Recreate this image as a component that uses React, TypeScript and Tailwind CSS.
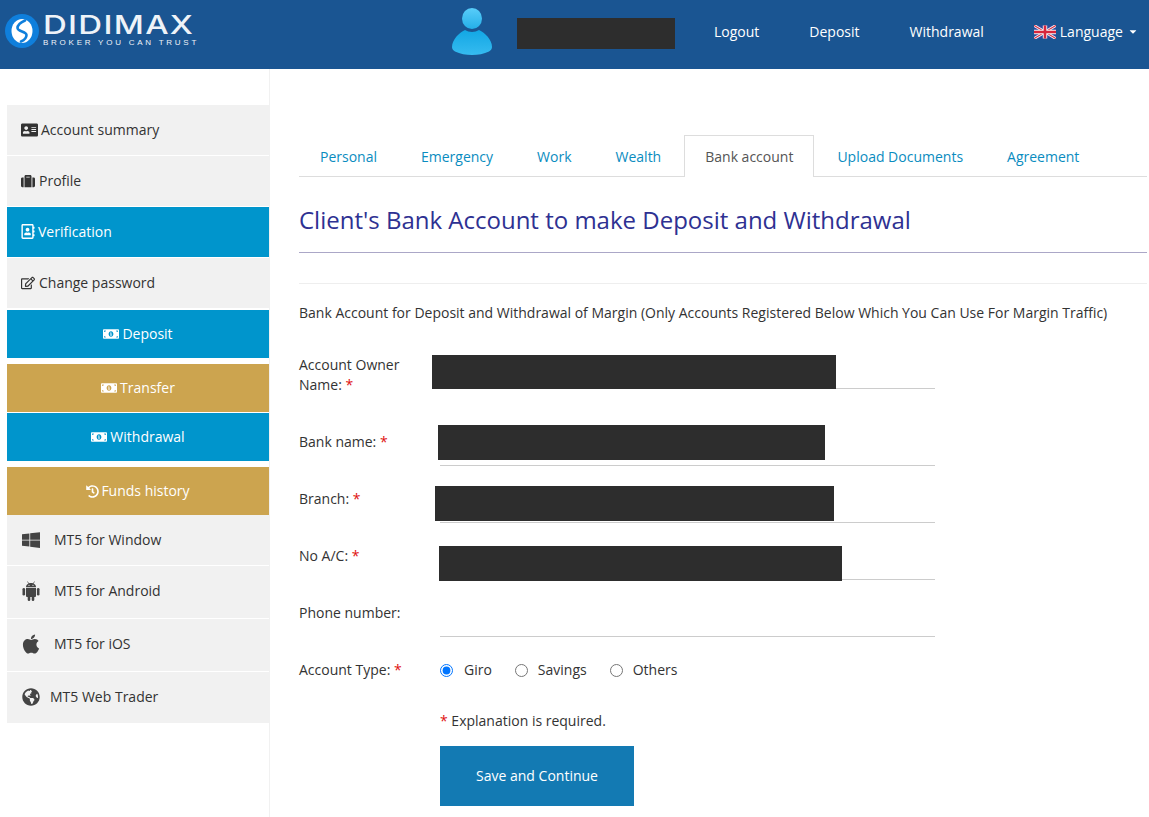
import type { ComponentType, ReactNode, SVGProps } from "react";
import {
  FaAddressCard,
  FaApple,
  FaCaretDown,
  FaGlobeAmericas,
  FaHistory,
  FaMoneyBillAlt,
  FaRegAddressBook,
  FaRegEdit,
  FaSuitcase,
  FaWindows,
} from "react-icons/fa";

const TABS = ["Personal", "Emergency", "Work", "Wealth", "Bank account", "Upload Documents", "Agreement"];

function Redacted({ className }: { className: string }) {
  return <div className={`absolute bg-[#2d2d2d] ${className}`} />;
}

function Logo() {
  return (
    <div className="flex items-center pl-[5px]">
      <svg width="34" height="34" viewBox="0 0 34 34" className="shrink-0">
        <circle cx="17" cy="17" r="17" fill="#0f7fdc" />
        <ellipse cx="17" cy="17" rx="10.500" ry="12" fill="#fff" />
        <path d="M20 6.500c-4.500 2-7.500 4.500-7.500 7.500 0 3.500 9 3.500 9 7 0 2.500-2 5-5.500 6.500" fill="none" stroke="#0f7fdc" strokeWidth="2.600" strokeLinecap="round" />
      </svg>
      <div className="ml-[4px] flex w-[156px] flex-col gap-[5px] font-['Inter',sans-serif] text-[#eef3f8]">
        <span className="origin-left scale-x-[1.27] text-[26px] leading-[19px] tracking-[1px] whitespace-nowrap">DIDIMAX</span>
        <span className="font-['Liberation_Sans',sans-serif] text-[8px] leading-[7px] tracking-[2.75px] whitespace-nowrap">BROKER YOU CAN TRUST</span>
      </div>
    </div>
  );
}

function Avatar() {
  return (
    <svg width="40" height="47" viewBox="0 0 40 47" className="shrink-0">
      <defs>
        <linearGradient id="avatarHead" x1="0" y1="0" x2="0" y2="1">
          <stop offset="0%" stopColor="#59cdfa" />
          <stop offset="100%" stopColor="#24afe8" />
        </linearGradient>
        <linearGradient id="avatarBody" x1="0" y1="0" x2="0" y2="1">
          <stop offset="0%" stopColor="#12a7e4" />
          <stop offset="100%" stopColor="#36bbf0" />
        </linearGradient>
      </defs>
      <ellipse cx="20" cy="10.500" rx="10" ry="10.500" fill="url(#avatarHead)" />
      <path d="M13 22c4 2.500 10 2.500 14 0 6 2.500 13 10 13 17 0 2-1 3-3 4.500-5 2.500-11 3.500-17 3.500s-12-1-17-3.500C1 42 0 41 0 39c0-7 7-14.500 13-17z" fill="url(#avatarBody)" />
    </svg>
  );
}

function UkFlag() {
  return (
    <svg width="22" height="14" viewBox="0 0 60 36" className="shrink-0">
      <rect width="60" height="36" fill="#2f4a9c" />
      <path d="M0 0l60 36M60 0L0 36" stroke="#f4f4f6" strokeWidth="8" />
      <path d="M0 0l60 36M60 0L0 36" stroke="#d8263c" strokeWidth="3" />
      <path d="M30 0v36M0 18h60" stroke="#f4f4f6" strokeWidth="12" />
      <path d="M30 0v36M0 18h60" stroke="#d8263c" strokeWidth="7" />
    </svg>
  );
}

function Header() {
  return (
    <header className="flex h-[69px] items-center bg-[#1a5592] text-sm font-medium text-white">
      <div className="w-[452px] shrink-0 -translate-y-[4px]">
        <Logo />
      </div>
      <div className="-mt-[6px]">
        <Avatar />
      </div>
      <div className="ml-[25px] h-[31px] w-[158px] -translate-y-[1px] bg-[#2d2d2d]" />
      <a className="ml-[39px] -translate-y-[3px]">Logout</a>
      <a className="ml-[50px] -translate-y-[3px]">Deposit</a>
      <a className="ml-[50px] -translate-y-[3px]">Withdrawal</a>
      <div className="ml-[50px] flex -translate-y-[3px] items-center">
        <UkFlag />
        <span className="ml-[4px]">Language</span>
        <FaCaretDown className="ml-[5px] h-[11px] w-[10px]" />
      </div>
    </header>
  );
}

// the FA4 windows glyph is square, FA5 is narrower
function SquareWindows(props: SVGProps<SVGSVGElement>) {
  return <FaWindows {...props} preserveAspectRatio="none" />;
}

// FA4 style full robot, the packaged ones only have the head
function AndroidRobot({ className }: { className?: string }) {
  return (
    <svg viewBox="0 0 18 20" fill="currentColor" className={className}>
      <path d="M4 6.200C4 3.800 6.200 2 9 2s5 1.800 5 4.200z" />
      <path d="M5.500 .5l1.500 2.500M12.500 .5L11 3" stroke="currentColor" strokeWidth=".7" />
      <circle cx="7" cy="4.300" r=".6" fill="#f1f1f1" />
      <circle cx="11" cy="4.300" r=".6" fill="#f1f1f1" />
      <path d="M4 7h10v8a1 1 0 0 1-1 1H5a1 1 0 0 1-1-1z" />
      <rect x="0.500" y="7" width="2.600" height="7.500" rx="1.300" />
      <rect x="14.900" y="7" width="2.600" height="7.500" rx="1.300" />
      <rect x="5.700" y="14" width="2.600" height="6" rx="1.300" />
      <rect x="9.700" y="14" width="2.600" height="6" rx="1.300" />
    </svg>
  );
}

interface SideItemProps {
  icon: ComponentType<{ className?: string }>;
  label: string;
  className: string;
  iconClass?: string;
}

function SideItem({ icon: Icon, label, className, iconClass = "h-[14px] w-[14px] mr-[4px]" }: SideItemProps) {
  return (
    <a className={`flex items-center text-sm ${className}`}>
      <Icon className={`shrink-0 ${iconClass}`} />
      <span>{label}</span>
    </a>
  );
}

function Sidebar() {
  const plain = "bg-[#f1f1f1] pl-[14px] text-[#333]";
  const blue = "bg-[#0095cc] font-medium text-white";
  const gold = "bg-[#cca44f] font-medium text-white";
  const money = "h-[14px] w-[16px] mr-[3px]";
  return (
    <aside className="ml-[7px] w-[263px] shrink-0 border-r border-[#f1f1f1] pt-[36px]">
      <SideItem icon={FaAddressCard} label="Account summary" className={`${plain} mb-[1px] h-[50px] pb-[1px]`} iconClass="h-[16px] w-[17px] mr-[3px]" />
      <SideItem icon={FaSuitcase} label="Profile" className={`${plain} mb-[1px] h-[50px] pb-[1px]`} />
      <SideItem icon={FaRegAddressBook} label="Verification" className={`${blue} mb-[1px] h-[50px] pl-[14px] pb-[1px]`} iconClass="h-[15px] w-[14px] mr-[3px]" />
      <SideItem icon={FaRegEdit} label="Change password" className={`${plain} h-[50px] pb-[1px]`} />
      <div className="h-[2px]" />
      <SideItem icon={FaMoneyBillAlt} label="Deposit" className={`${blue} mb-[6px] h-[48px] justify-center`} iconClass={money} />
      <SideItem icon={FaMoneyBillAlt} label="Transfer" className={`${gold} mb-[1px] h-[48px] justify-center`} iconClass={money} />
      <SideItem icon={FaMoneyBillAlt} label="Withdrawal" className={`${blue} mb-[6px] h-[48px] justify-center`} iconClass={money} />
      <SideItem icon={FaHistory} label="Funds history" className={`${gold} h-[48px] justify-center`} iconClass="h-[13px] w-[13px] mr-[2px]" />
      <SideItem icon={SquareWindows} label="MT5 for Window" className={`${plain} mb-[1px] h-[50px] pb-[1px]`} iconClass="h-[18px] w-[18px] ml-[1px] mr-[14px] text-[#444]" />
      <SideItem icon={AndroidRobot} label="MT5 for Android" className={`${plain} mb-[1px] h-[52px] pb-[3px]`} iconClass="h-[20px] w-[18px] ml-[1px] mr-[14px] text-[#444]" />
      <SideItem icon={FaApple} label="MT5 for iOS" className={`${plain} mb-[1px] h-[52px] pb-[3px]`} iconClass="h-[22px] w-[20px] mr-[13px] text-[#444]" />
      <SideItem icon={FaGlobeAmericas} label="MT5 Web Trader" className={`${plain} h-[51px] pb-[1px]`} iconClass="h-[18px] w-[18px] ml-[1px] mr-[10px] text-[#444]" />
    </aside>
  );
}

function Tabs() {
  return (
    <ul className="mt-[66px] flex h-[42px] border-b border-[#ddd]">
      {TABS.map((t) =>
        t === "Bank account" ? (
          <li key={t} className="mr-[2px] h-[42px] border border-b-0 border-[#ddd] bg-white px-[20px] pt-[11px] text-sm leading-5 text-[#555]">
            {t}
          </li>
        ) : (
          <li key={t} className="mr-[2px] px-[21px] pt-[12px] text-sm leading-5 text-[#0a8cc0]">
            {t}
          </li>
        ),
      )}
    </ul>
  );
}

function Star() {
  return <span className="text-[#e01010]">*</span>;
}

function Field({ label, children, className }: { label: ReactNode; children?: ReactNode; className: string }) {
  return (
    <div className={`flex w-[636px] ${className}`}>
      <label className="w-[141px] shrink-0 pt-[1px] text-sm leading-5 text-[#333]">{label}</label>
      <div className="relative flex-1 self-stretch border-b border-[#ccc]">{children}</div>
    </div>
  );
}

function Radio({ label, checked, className }: { label: string; checked?: boolean; className: string }) {
  return (
    <label className={`flex items-center text-sm text-[#333] ${className}`}>
      <input type="radio" name="accountType" defaultChecked={checked} className="m-0 mr-[10px] h-[13px] w-[13px]" />
      {label}
    </label>
  );
}

function BankForm() {
  return (
    <section>
      <h2 className="mt-[24px] text-2xl leading-[38px] text-[#2e3192]">Client's Bank Account to make Deposit and Withdrawal</h2>
      <div className="mt-[13px] h-px bg-[#aba7c7]" />
      <div className="mt-[30px] h-px bg-[#eee]" />
      <p className="mt-[19px] text-sm leading-5 text-[#333]">
        Bank Account for Deposit and Withdrawal of Margin (Only Accounts Registered Below Which You Can Use For Margin Traffic)
      </p>
      <Field
        className="mt-[31px] h-[35px]"
        label={
          <>
            Account Owner
            <br />
            Name: <Star />
          </>
        }
      >
        <Redacted className="-left-[8px] top-[1px] h-[34px] w-[404px]" />
      </Field>
      <Field className="mt-[42px] h-[35px]" label={<>Bank name: <Star /></>}>
        <Redacted className="-left-[2px] -top-[6px] h-[35px] w-[387px]" />
      </Field>
      <Field className="mt-[22px] h-[35px]" label={<>Branch: <Star /></>}>
        <Redacted className="-left-[5px] -top-[2px] h-[35px] w-[399px]" />
      </Field>
      <Field className="mt-[22px] h-[35px]" label={<>No A/C: <Star /></>}>
        <Redacted className="-left-[1px] top-[1px] h-[35px] w-[403px]" />
      </Field>
      <Field className="mt-[22px] h-[35px]" label="Phone number:" />
      <div className="mt-[23px] flex items-center">
        <span className="w-[141px] shrink-0 text-sm leading-5 text-[#333]">
          Account Type: <Star />
        </span>
        <Radio label="Giro" checked className="mr-[23px] [&>input]:mr-[11px]" />
        <Radio label="Savings" className="mr-[23px]" />
        <Radio label="Others" className="" />
      </div>
      <p className="mt-[31px] ml-[141px] text-sm leading-5 text-[#333]">
        <Star /> Explanation is required.
      </p>
      <button className="mt-[15px] ml-[141px] h-[60px] w-[194px] bg-[#137ab3] text-sm font-medium text-white">
        Save and Continue
      </button>
    </section>
  );
}

export default function App() {
  return (
    <div className="h-[817px] overflow-hidden bg-white font-['Open_Sans',sans-serif]">
      <Header />
      <div className="flex h-[748px]">
        <Sidebar />
        <main className="ml-[29px] w-[848px]">
          <Tabs />
          <BankForm />
        </main>
      </div>
    </div>
  );
}
